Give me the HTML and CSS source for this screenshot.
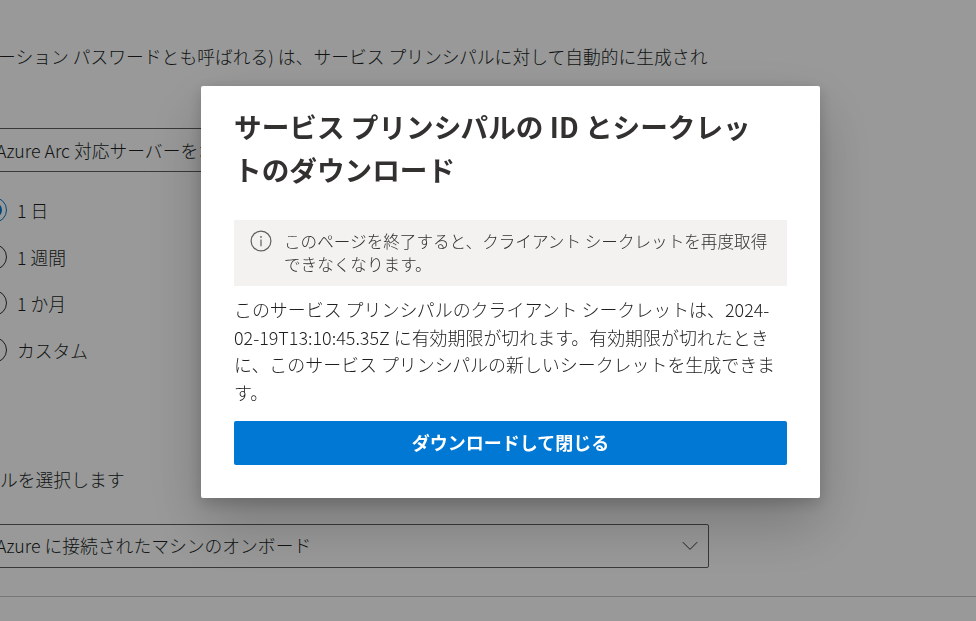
FILE: index.html
```html
<!DOCTYPE html>
<html lang="ja">
<head>
<meta charset="utf-8">
<title>サービス プリンシパルの ID とシークレットのダウンロード</title>
<link rel="stylesheet" href="styles.css">
</head>
<body>
<main class="page">
  <p class="intro">ーション パスワードとも呼ばれる) は、サービス プリンシパルに対して自動的に生成され</p>
  <div class="field field-name"><span class="field-text">Azure Arc 対応サーバーをオンボード</span></div>
  <ul class="radios">
    <li class="radio"><span class="dot dot-on"><span class="dot-fill"></span></span><span>1 日</span></li>
    <li class="radio"><span class="dot"></span><span>1 週間</span></li>
    <li class="radio"><span class="dot"></span><span>1 か月</span></li>
    <li class="radio"><span class="dot"></span><span>カスタム</span></li>
  </ul>
  <p class="label">ルを選択します</p>
  <div class="field field-select">
    <span class="field-text">Azure に接続されたマシンのオンボード</span>
    <svg class="chevron" width="16" height="10" viewBox="0 0 16 10"><path d="M.8 1.2 8 8.4l7.2-7.2" fill="none" stroke="#323130" stroke-width="1"/></svg>
  </div>
  <hr class="rule">
</main>
<div class="overlay">
  <section class="dialog">
    <h1 class="title">サービス プリンシパルの ID とシークレットのダウンロード</h1>
    <div class="notice">
      <svg class="notice-icon" width="22" height="22" viewBox="0 0 22 22"><circle cx="11" cy="11" r="9.9" fill="none" stroke="#605e5c" stroke-width="1.2"/><circle cx="11" cy="6.9" r=".9" fill="#605e5c"/><path d="M11 9.6v6.6" stroke="#605e5c" stroke-width="1.2"/></svg>
      <p class="notice-text">このページを終了すると、クライアント シークレットを再度取得できなくなります。</p>
    </div>
    <p class="body">このサービス プリンシパルのクライアント シークレットは、2024-02-19T13:10:45.35Z に有効期限が切れます。有効期限が切れたときに、このサービス プリンシパルの新しいシークレットを生成できます。</p>
    <button class="primary" type="button">ダウンロードして閉じる</button>
  </section>
</div>
</body>
</html>
```
FILE: styles.css
```css
* { box-sizing: border-box; }
html, body { margin: 0; height: 100%; }
body {
  overflow: hidden;
  background: #fff;
  color: #201f1e;
  font-family: "Noto Sans CJK JP", sans-serif;
  font-size: 17.8px;
  font-weight: 300;
}
.page { height: 621px; padding-top: 43px; overflow: hidden; }
.intro { margin: 0 0 58px; height: 27px; line-height: 27px; width: 709px; white-space: nowrap; text-indent: -2px; }
.field {
  display: flex;
  align-items: center;
  margin-left: -20px;
  width: 729px;
  height: 44px;
  padding-left: 15px;
  border: 1px solid #605e5c;
  border-radius: 2px;
}
.field-text { flex: 1; white-space: nowrap; padding-bottom: 2px; }
.field-name .field-text { padding-bottom: 0; }
.chevron { margin-right: 10px; }
.radios { list-style: none; margin: 15px 0 0; padding: 0; display: flex; flex-direction: column; }
.radio { display: flex; align-items: center; gap: 10px; height: 46.6px; margin-left: -19px; }
.dot { width: 26px; height: 26px; border: 1px solid #323130; border-radius: 50%; display: flex; align-items: center; justify-content: center; }
.dot-on { border-color: #0078d4; }
.dot-fill { width: 16px; height: 16px; border-radius: 50%; background: #0078d4; }
.label { margin: 91px 0 0; height: 30px; line-height: 30px; white-space: nowrap; }
.field-select { margin-top: 30px; }
.rule { margin: 28px 0 0; border: 0; border-top: 1px solid #c8c6c4; }
.overlay {
  position: fixed;
  inset: 0;
  background: rgba(0, 0, 0, .4);
}
.dialog {
  position: absolute;
  left: 201px;
  top: 86px;
  width: 619px;
  height: 412px;
  padding: 19px 33px 0;
  background: #fff;
  border-radius: 2px;
  box-shadow: 0 25.6px 57.6px rgba(0, 0, 0, .22), 0 4.8px 14.4px rgba(0, 0, 0, .18);
}
.title { margin: 0; padding-right: 20px; font-size: 27.65px; line-height: 43px; font-weight: 700; color: #323130; }
.notice { display: flex; margin-top: 29px; padding: 10px 16px 8px 16px; gap: 12px; background: #f3f2f1; height: 66px; }
.notice-icon { flex: none; }
.notice-text { margin: 0; line-height: 23px; font-size: 16.6px; color: #323130; }
.body { margin: 10px 0 0; line-height: 27.5px; font-size: 17.95px; }
.primary {
  display: block;
  width: 100%;
  height: 44px;
  margin-top: 15px;
  padding: 0 0 2px;
  border: 0;
  border-radius: 2px;
  background: #0078d4;
  color: #fff;
  font: 700 18px "Noto Sans CJK JP", sans-serif;
}
```
